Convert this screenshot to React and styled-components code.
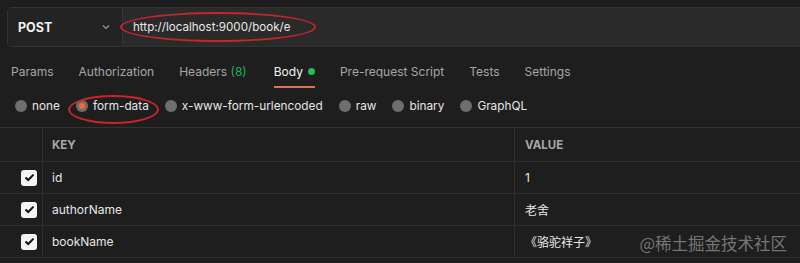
import React from "react";
import styled, { createGlobalStyle } from "styled-components";

const Global = createGlobalStyle`
  html, body { margin: 0; padding: 0; background: #1e1e1e; }
  body { font-family: Inter, "Noto Sans", "Noto Sans CJK SC", sans-serif; color: #e6e6e6; }
  * { box-sizing: border-box; }
`;

const Page = styled.div`
  position: relative;
  width: 800px;
  height: 263px;
  overflow: hidden;
  padding-top: 7px;
  background: #1e1e1e;
`;

const RequestBar = styled.div`
  display: flex;
  height: 40px;
  margin-left: 7px;
  border: 1px solid #333;
  border-right: none;
  border-radius: 5px 0 0 5px;
  overflow: hidden;
`;

const MethodBox = styled.div`
  width: 115px;
  flex: none;
  display: flex;
  align-items: center;
  justify-content: space-between;
  padding: 0 11px 0 10px;
  background: #232323;
  border-right: 1px solid #363636;
  font-size: 12.5px;
  font-weight: 700;
  color: #f2f2f2;
`;

const UrlBox = styled.div`
  flex: 1;
  display: flex;
  align-items: center;
  padding-left: 10px;
  background: #2a2a2a;
  font-size: 11.6px;
  color: #e8e8e8;
`;

const Circled = styled.span`
  position: relative;
  display: inline-flex;
  align-items: center;
  &::after {
    content: "";
    position: absolute;
    left: ${(p) => p.$l}px;
    right: ${(p) => p.$r}px;
    top: ${(p) => p.$t}px;
    bottom: ${(p) => p.$b}px;
    border: 2px solid #c4262b;
    border-radius: 50%;
    pointer-events: none;
  }
`;

const TabsRow = styled.div`
  display: flex;
  gap: 25px;
  height: 32px;
  margin-top: 9px;
  padding-left: 11px;
`;

const Tab = styled.div`
  display: flex;
  align-items: center;
  gap: 5px;
  height: 100%;
  margin-left: ${(p) => p.$shift || 0}px;
  font-size: 12px;
  color: ${(p) => (p.$active ? "#f2f2f2" : "#a6a6a6")};
  border-bottom: 2px solid ${(p) => (p.$active ? "#e0704e" : "transparent")};
`;

const Count = styled.span`
  color: #1fb25a;
`;

const Dot = styled.span`
  width: 7px;
  height: 7px;
  border-radius: 50%;
  background: #1fbf5a;
`;

const RadioRow = styled.div`
  display: flex;
  align-items: center;
  gap: 16px;
  height: 39px;
  padding: 0 0 3px 15px;
`;

const RadioItem = styled.label`
  display: flex;
  align-items: center;
  gap: 5px;
  font-size: 11.8px;
  color: #e6e6e6;
`;

const RadioCircle = styled.span`
  width: 12px;
  height: 12px;
  border-radius: 50%;
  background: #6e6e6e;
  display: flex;
  align-items: center;
  justify-content: center;
  &::after {
    content: "";
    width: 6px;
    height: 6px;
    border-radius: 50%;
    background: ${(p) => (p.$checked ? "#f06a35" : "transparent")};
  }
`;

const Table = styled.div`
  display: grid;
  grid-template-columns: 43px 472px 1fr;
  border-top: 1px solid #333;
`;

const Cell = styled.div`
  display: flex;
  align-items: center;
  height: ${(p) => (p.$head ? 34 : 32)}px;
  padding-left: ${(p) => p.$pad ?? 0}px;
  justify-content: ${(p) => (p.$check ? "flex-end" : "flex-start")};
  padding-right: ${(p) => (p.$check ? 5 : 0)}px;
  border-bottom: 1px solid #2f2f2f;
  border-right: ${(p) => (p.$last ? "none" : "1px solid #2f2f2f")};
  font-size: ${(p) => (p.$head ? 11.5 : 12)}px;
  font-weight: ${(p) => (p.$head ? 700 : 400)};
  color: ${(p) => p.$color || "#e6e6e6"};
`;

const Checkbox = styled.span`
  width: 16px;
  height: 16px;
  border-radius: 3px;
  background: #f4f4f4;
  display: flex;
  align-items: center;
  justify-content: center;
`;

const Watermark = styled.div`
  position: absolute;
  right: 13px;
  bottom: 8px;
  font-size: 16.5px;
  color: rgba(205, 205, 205, 0.5);
  font-family: "Noto Sans CJK SC", sans-serif;
`;

const Chevron = () => (
  <svg width="10" height="10" viewBox="0 0 10 10" fill="none">
    <path d="M2 3.5 L5 6.5 L8 3.5" stroke="#9a9a9a" strokeWidth="1.1" />
  </svg>
);

const Check = () => (
  <svg width="11" height="9" viewBox="0 0 11 9" fill="none">
    <path d="M1.5 4.5 L4.2 7 L9.5 1.6" stroke="#111" strokeWidth="2" />
  </svg>
);

const tabs = [
  { label: "Params" },
  { label: "Authorization" },
  { label: "Headers", count: "(8)" },
  { label: "Body", active: true, dot: true, shift: 2 },
  { label: "Pre-request Script" },
  { label: "Tests" },
  { label: "Settings" },
];

const radios = ["none", "form-data", "x-www-form-urlencoded", "raw", "binary", "GraphQL"];

const rows = [
  { key: "id", value: "1", color: "#ecebcf" },
  { key: "authorName", value: "老舍" },
  { key: "bookName", value: "《骆驼祥子》" },
];

export default function App() {
  return (
    <Page>
      <Global />
      <RequestBar>
        <MethodBox>
          POST
          <Chevron />
        </MethodBox>
        <UrlBox>
          <Circled $l={-13} $r={-26} $t={-8} $b={-8}>
            http://localhost:9000/book/e
          </Circled>
        </UrlBox>
      </RequestBar>
      <TabsRow>
        {tabs.map((t) => (
          <Tab key={t.label} $active={t.active} $shift={t.shift}>
            <span>
              {t.label}
              {t.count && <Count> {t.count}</Count>}
            </span>
            {t.dot && <Dot />}
          </Tab>
        ))}
      </TabsRow>
      <RadioRow>
        {radios.map((r) =>
          r === "form-data" ? (
            <Circled key={r} $l={-8} $r={-10} $t={-4} $b={-11}>
              <RadioItem>
                <RadioCircle $checked />
                {r}
              </RadioItem>
            </Circled>
          ) : (
            <RadioItem key={r}>
              <RadioCircle />
              {r}
            </RadioItem>
          )
        )}
      </RadioRow>
      <Table>
        <Cell $head />
        <Cell $head $pad={9} $color="#a8a8a8">KEY</Cell>
        <Cell $head $pad={10} $color="#a8a8a8" $last>VALUE</Cell>
        {rows.map((r) => (
          <React.Fragment key={r.key}>
            <Cell $check>
              <Checkbox>
                <Check />
              </Checkbox>
            </Cell>
            <Cell $pad={9}>{r.key}</Cell>
            <Cell $pad={10} $last $color={r.color}>{r.value}</Cell>
          </React.Fragment>
        ))}
      </Table>
      <Watermark>@稀土掘金技术社区</Watermark>
    </Page>
  );
}
